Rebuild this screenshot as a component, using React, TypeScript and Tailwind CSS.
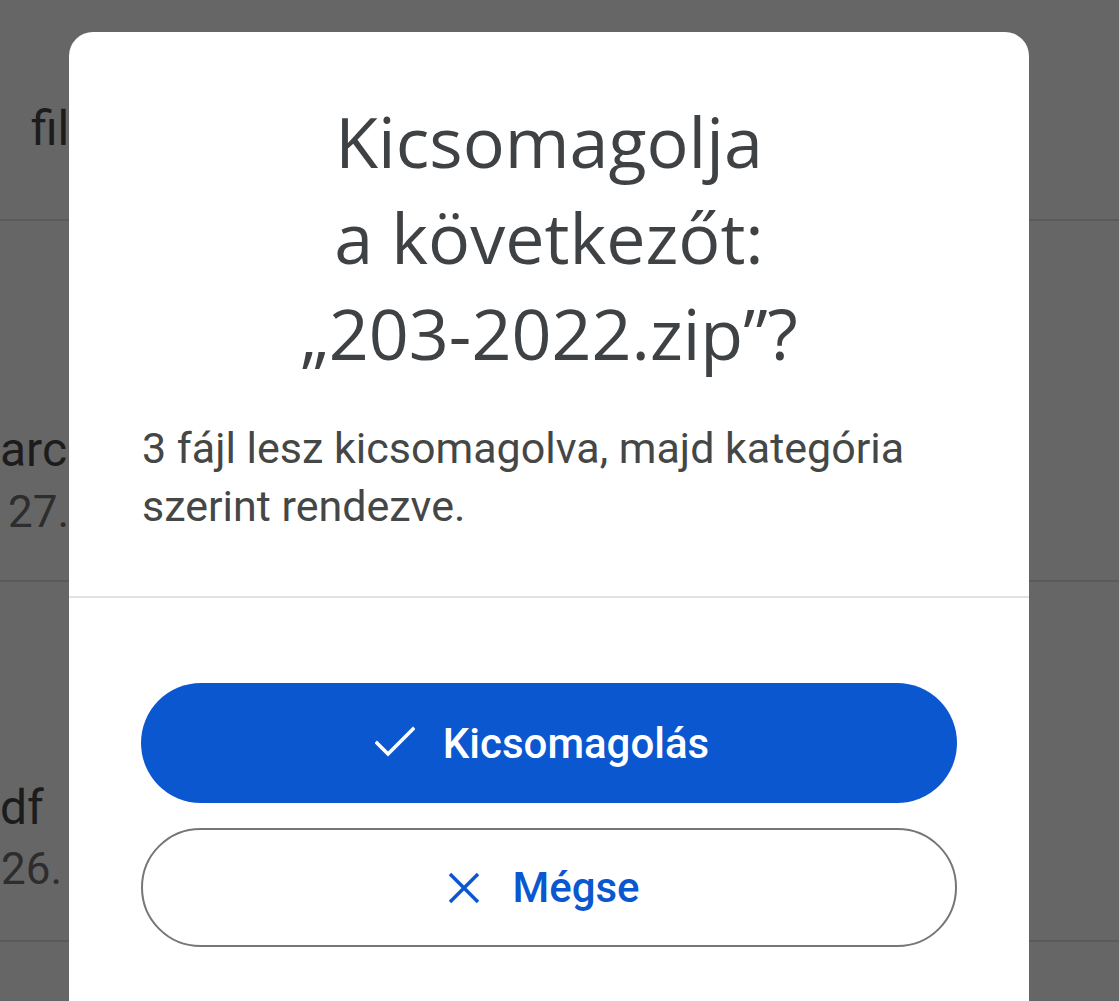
const rowText = "font-['Roboto',sans-serif] text-[#1c1c1c] text-[48px] leading-none whitespace-nowrap";
const dateText = "font-['Roboto',sans-serif] text-[#2d2d2d] text-[44px] leading-none whitespace-nowrap";

function CheckIcon() {
  return (
    <svg width="40" height="40" viewBox="0 0 40 40" fill="none">
      <polyline points="2,20 13,31 38,6" stroke="currentColor" strokeWidth="3.5" strokeLinecap="square" />
    </svg>
  );
}

function CloseIcon() {
  return (
    <svg width="40" height="40" viewBox="0 0 40 40" fill="none">
      <path d="M6 6 L34 34 M34 6 L6 34" stroke="currentColor" strokeWidth="3.5" />
    </svg>
  );
}

export default function App() {
  return (
    <div className="relative w-[1119px] h-[1001px] overflow-hidden bg-[#666666]">
      {/* dimmed file list behind the dialog */}
      <div className="flex flex-col">
        <div className="h-[221px] border-b-2 border-[#5a5a5a] pt-[105px] pl-[31px]">
          <p className={rowText}>fil</p>
        </div>
        <div className="h-[361px] border-b-2 border-[#5a5a5a] pt-[205px] flex flex-col gap-[16px]">
          <p className={rowText}>arc</p>
          <p className={`${dateText} pl-[8px]`}>27.</p>
        </div>
        <div className="h-[360px] border-b-2 border-[#5a5a5a] pt-[202px] flex flex-col gap-[15px]">
          <p className={rowText}>df</p>
          <p className={`${dateText} pl-[1px]`}>26.</p>
        </div>
      </div>

      {/* dialog */}
      <div className="absolute left-[69px] top-[32px] w-[960px] h-[1020px] bg-white rounded-[24px] flex flex-col">
        <h1 className="pt-[61px] text-center font-['Open_Sans',sans-serif] text-[70px] leading-[96px] text-[#3f4245]">
          <span className="block">Kicsomagolja</span>
          <span className="block">a következőt:</span>
          <span className="block">„203-2022.zip”?</span>
        </h1>
        <p className="mt-[38px] px-[73px] font-['Roboto',sans-serif] text-[43px] leading-[58px] text-[#444746]">
          3 fájl lesz kicsomagolva, majd kategória szerint rendezve.
        </p>
        <div className="mt-[61px] h-[2px] bg-[#e2e2e2]" />
        <div className="px-[72px] pt-[85px] flex flex-col gap-[25px]">
          <button className="h-[120px] rounded-full bg-[#0b57d0] text-white flex items-center justify-center gap-[28px] pr-[14px] font-['Roboto',sans-serif] font-medium text-[42px]">
            <CheckIcon />
            <span>Kicsomagolás</span>
          </button>
          <button className="h-[119px] rounded-full border-2 border-[#747775] text-[#0b57d0] flex items-center justify-center gap-[28px] pr-[14px] font-['Roboto',sans-serif] font-medium text-[42px]">
            <CloseIcon />
            <span>Mégse</span>
          </button>
        </div>
      </div>
    </div>
  );
}
